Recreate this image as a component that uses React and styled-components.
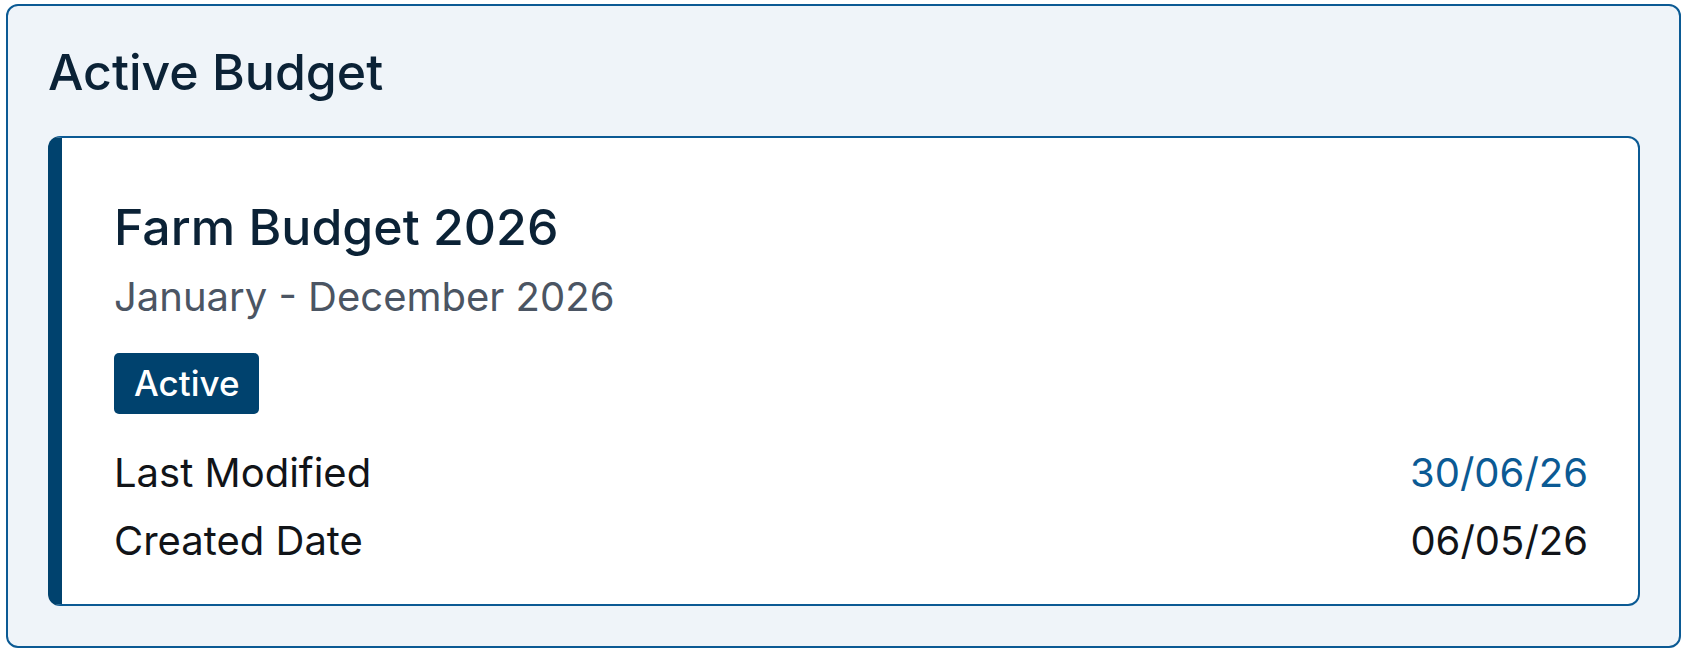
import React from "react";
import styled, { createGlobalStyle } from "styled-components";

const GlobalStyle = createGlobalStyle`
    html, body {
        margin: 0;
        padding: 0;
        background: #ffffff;
    }
    body {
        font-family: "Inter", "Noto Sans", sans-serif;
    }
`;

const Page = styled.div`
    padding: 4px 6px;
`;

const Panel = styled.section`
    background: #eff4f9;
    border: 2px solid #0b5a94;
    border-radius: 12px;
    padding: 36px 39px 40px 40px;
    height: 644px;
    box-sizing: border-box;
    display: flex;
    flex-direction: column;
    gap: 34px;
`;

const PanelTitle = styled.h2`
    margin: 0;
    font-size: 50px;
    font-weight: 500;
    line-height: 1.2;
    color: #0b2236;
`;

const Card = styled.div`
    flex: 1;
    background: #ffffff;
    border: 2px solid #0b5a94;
    border-left: 14px solid #00426e;
    border-radius: 12px;
    padding: 59px 50px 30px 52px;
    display: flex;
    flex-direction: column;
`;

const CardTitle = styled.h3`
    margin: 0;
    font-size: 50px;
    font-weight: 500;
    line-height: 1.2;
    color: #0b2236;
`;

const Period = styled.div`
    margin-top: 16px;
    font-size: 40px;
    line-height: 1.2;
    color: #4b5563;
`;

const Badge = styled.span`
    align-self: flex-start;
    margin-top: 32px;
    background: #00426e;
    color: #ffffff;
    font-size: 35px;
    font-weight: 500;
    line-height: 61px;
    padding: 0 20px;
    border-radius: 5px;
`;

const Details = styled.div`
    margin-top: 35px;
    display: flex;
    flex-direction: column;
    gap: 20px;
`;

const Row = styled.div`
    display: flex;
    justify-content: space-between;
    align-items: baseline;
    font-size: 40px;
    line-height: 1.2;
    color: #111418;
`;

const Value = styled.span`
    color: ${(p) => (p.$accent ? "#0b5a94" : "#111418")};
`;

export default function App() {
    return (
        <Page>
            <GlobalStyle />
            <Panel>
                <PanelTitle>Active Budget</PanelTitle>
                <Card>
                    <CardTitle>Farm Budget 2026</CardTitle>
                    <Period>January - December 2026</Period>
                    <Badge>Active</Badge>
                    <Details>
                        <Row>
                            <span>Last Modified</span>
                            <Value $accent>30/06/26</Value>
                        </Row>
                        <Row>
                            <span>Created Date</span>
                            <Value>06/05/26</Value>
                        </Row>
                    </Details>
                </Card>
            </Panel>
        </Page>
    );
}
